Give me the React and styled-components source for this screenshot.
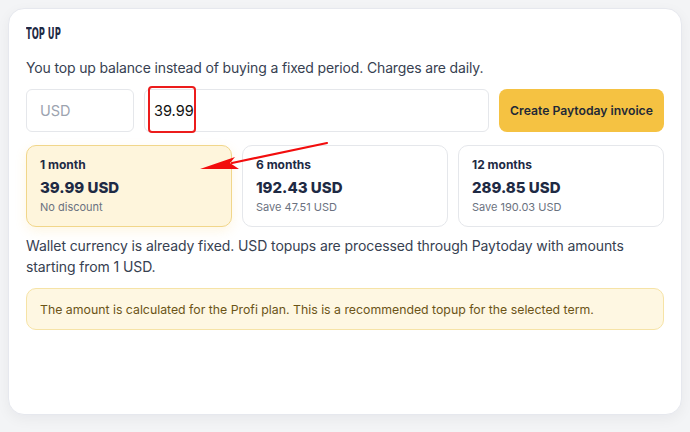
import React from 'react'
import styled, { createGlobalStyle } from 'styled-components'

const GlobalStyle = createGlobalStyle`
  body {
    margin: 0;
    background: #f3f4f6;
    font-family: Inter, "Noto Sans", sans-serif;
  }
`

const plans = [
  { label: '1 month', price: '39.99 USD', note: 'No discount', active: true },
  { label: '6 months', price: '192.43 USD', note: 'Save 47.51 USD' },
  { label: '12 months', price: '289.85 USD', note: 'Save 190.03 USD' },
]

function App() {
  return (
    <Page>
      <GlobalStyle />
      <Card>
        <Title>Top up</Title>
        <Lead>You top up balance instead of buying a fixed period. Charges are daily.</Lead>

        <InputRow>
          <Field placeholder='USD' $width='108px' />
          <AmountWrap>
            <Field defaultValue='39.99' />
            <Highlight />
          </AmountWrap>
          <InvoiceButton>Create Paytoday invoice</InvoiceButton>
        </InputRow>

        <Plans>
          {plans.map((p) => (
            <Plan key={p.label} $active={p.active}>
              <PlanLabel>{p.label}</PlanLabel>
              <PlanPrice>{p.price}</PlanPrice>
              <PlanNote>{p.note}</PlanNote>
            </Plan>
          ))}
          {/* red annotation arrow pointing at the selected plan */}
          <Arrow width='140' height='40' viewBox='0 0 140 40'>
            <line x1='129' y1='2' x2='34' y2='22' stroke='#f20d0d' strokeWidth='2.2' strokeLinecap='round' />
            <polygon points='2,28 37,16 32,22 41,28' fill='#f20d0d' />
          </Arrow>
        </Plans>

        <Info>
          Wallet currency is already fixed. USD topups are processed through Paytoday with amounts
          starting from 1 USD.
        </Info>

        <Notice>
          The amount is calculated for the Profi plan. This is a recommended topup for the selected term.
        </Notice>
      </Card>
    </Page>
  )
}

export default App

const Page = styled.div`
  padding: 8px 8px 18px 8px;
`

const Card = styled.div`
  width: 674px;
  height: 407px;
  box-sizing: border-box;
  background: #ffffff;
  border: 1px solid #e6e8ee;
  border-radius: 16px;
  box-shadow: 0 4px 14px rgba(17, 24, 39, 0.05);
  padding: 17px 17px 0 17px;
`

const Title = styled.h2`
  margin: 0;
  font-family: "DejaVu Sans Condensed", "Liberation Sans Narrow", sans-serif;
  font-weight: 700;
  font-size: 15.5px;
  line-height: 16px;
  text-transform: uppercase;
  color: #1e2a44;
  transform: scaleX(0.6);
  transform-origin: left center;
`

const Lead = styled.p`
  margin: 16px 0 0;
  font-size: 14px;
  line-height: 20px;
  color: #374151;
  letter-spacing: -0.15px;
`

const InputRow = styled.div`
  display: flex;
  gap: 10px;
  margin-top: 11px;
  height: 43px;
`

const Field = styled.input`
  box-sizing: border-box;
  width: ${(p) => p.$width || '100%'};
  height: 43px;
  border: 1px solid #e5e7eb;
  border-radius: 6px;
  padding: 0 13px;
  font-family: Inter, sans-serif;
  font-size: 14.5px;
  color: #111111;
  background: #ffffff;
  outline: none;

  &::placeholder {
    color: #9ca3af;
  }
`

const AmountWrap = styled.div`
  position: relative;
  flex: 1;

  input {
    padding-left: 9px;
  }
`

const Highlight = styled.div`
  position: absolute;
  left: 4px;
  top: -3px;
  width: 48px;
  height: 47px;
  box-sizing: border-box;
  border: 2px solid #ec1c1c;
  border-radius: 4px;
  pointer-events: none;
`

const InvoiceButton = styled.button`
  flex: none;
  width: 165px;
  height: 43px;
  border: none;
  border-radius: 8px;
  background: #f5c242;
  color: #1f2937;
  font-family: Inter, sans-serif;
  font-size: 12.2px;
  font-weight: 600;
  cursor: pointer;
`

const Plans = styled.div`
  position: relative;
  display: grid;
  grid-template-columns: repeat(3, 1fr);
  gap: 10px;
  margin-top: 13px;
`

const Plan = styled.div`
  box-sizing: border-box;
  height: 82px;
  padding: 11px 13px;
  border-radius: 10px;
  border: 1px solid ${(p) => (p.$active ? '#f1d68a' : '#e5e7eb')};
  background: ${(p) => (p.$active ? '#fef5dc' : '#ffffff')};
  box-shadow: ${(p) => (p.$active ? '0 4px 12px rgba(245, 194, 66, 0.15)' : 'none')};
`

const PlanLabel = styled.div`
  font-size: 12px;
  font-weight: 700;
  line-height: 15px;
  color: #1e2a44;
`

const PlanPrice = styled.div`
  margin-top: 6px;
  font-size: 15px;
  font-weight: 800;
  line-height: 19px;
  color: #1e2a44;
`

const PlanNote = styled.div`
  margin-top: 3px;
  font-size: 11px;
  line-height: 14px;
  color: #6b7280;
`

const Arrow = styled.svg`
  position: absolute;
  left: 172px;
  top: -4px;
  pointer-events: none;
`

const Info = styled.p`
  margin: 8px 0 0;
  font-size: 14px;
  line-height: 21px;
  color: #374151;
  letter-spacing: -0.1px;
`

const Notice = styled.div`
  margin-top: 11px;
  box-sizing: border-box;
  height: 42px;
  display: flex;
  align-items: center;
  padding: 0 13px;
  border: 1px solid #f6e3a6;
  border-radius: 10px;
  background: #fef7e2;
  color: #6b5417;
  font-size: 12.3px;
`
